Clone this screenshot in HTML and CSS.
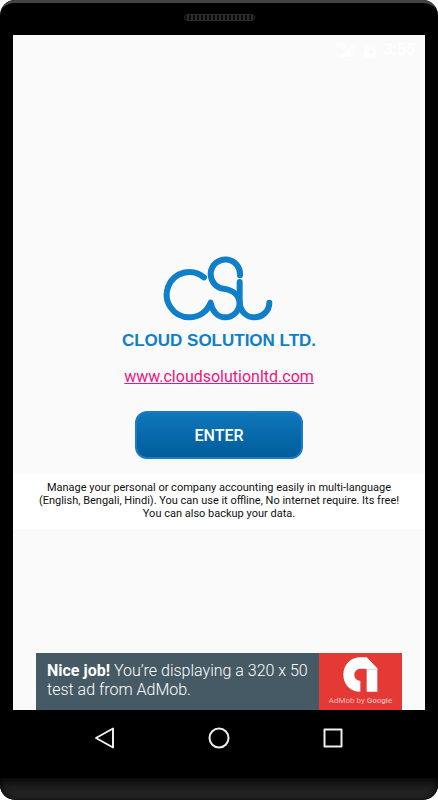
FILE: index.html
```html
<!DOCTYPE html>
<html lang="en">
    <head>
        <meta charset="UTF-8">
        <meta name="viewport" content="width=device-width, initial-scale=1.0">
        <title>Cloud Solution Ltd.</title>
        <link rel="stylesheet" href="styles.css">
    </head>
    <body>
        <div class="phone">
            <div class="phone-top">
                <div class="speaker"></div>
            </div>

            <div class="screen">
                <header class="status-bar">
                    <svg width="21" height="17" viewBox="0 0 21 17">
                        <path d="M20 1v15H5z" fill="#fcfcfc"/>
                        <path d="M15 6v10H5z" fill="#fff"/>
                        <path d="M3 1L1 5h4M4 1v6M10 2H7v5h3V4H9" fill="none" stroke="#fff" stroke-width="1"/>
                    </svg>
                    <svg width="12" height="17" viewBox="0 0 12 17">
                        <path d="M0 3h3V1h6v2h3v6H0z" fill="#fcfcfc"/>
                        <path d="M0 9h5l-2 3h3l-2 4 6-6H7l1-1h4v8H0z" fill="#fff"/>
                    </svg>
                    <span class="clock">3:55</span>
                </header>

                <main>
                    <svg class="logo" width="112" height="65" viewBox="24 15 336 195">
                        <path d="M147 79A68 68 0 1 0 103 199C132 199 157 182 167 155C171 181 188 199 211 199C235 199 254 179 254 155V93"/>
                        <path d="M255 73A44 44 0 1 0 205 113C231 117 250 126 254 155C256 181 274 199 298 199C323 199 343 179 343 155"/>
                    </svg>
                    <h1>CLOUD SOLUTION LTD.</h1>
                    <a class="site" href="#">www.cloudsolutionltd.com</a>
                    <button class="enter">ENTER</button>
                    <p class="about">Manage your personal or company accounting easily in multi-language (English, Bengali, Hindi). You can use it offline, No internet require. Its free! You can also backup your data.</p>
                </main>

                <div class="ad">
                    <p class="ad-text"><b>Nice job!</b> You’re displaying a 320 x 50 test ad from AdMob.</p>
                    <div class="ad-brand">
                        <svg width="35" height="35" viewBox="0 0 105 105">
                            <path d="M52 104C22 104 1 82 1 53C1 23 23 1 53 1H71L103 34V104H71V35H53C42 35 34 43 34 53C34 64 42 71 52 71z" fill="#fff"/>
                            <path d="M71 35H103V39H71z" fill="#ddd"/>
                        </svg>
                        <span>AdMob by <b>Google</b></span>
                    </div>
                </div>
            </div>

            <nav class="nav-bar">
                <button aria-label="Back">
                    <svg width="24" height="24" viewBox="0 0 24 24"><path d="M20 2.500V21.500L3 12z"/></svg>
                </button>
                <button aria-label="Home">
                    <svg width="24" height="24" viewBox="0 0 24 24"><circle cx="12" cy="12" r="9.500"/></svg>
                </button>
                <button aria-label="Recent">
                    <svg width="24" height="24" viewBox="0 0 24 24"><rect x="3.500" y="3.500" width="17" height="17"/></svg>
                </button>
            </nav>
            <div class="phone-bottom"></div>
        </div>
    </body>
</html>
```
FILE: styles.css
```css
* {
    box-sizing: border-box;
}

body {
    font-family: Roboto, Arial, sans-serif;
    background-color: white;
    margin: 0;
}

h1, p {
    margin: 0;
}

.phone {
    display: flex;
    flex-direction: column;
    min-height: 100vh;
    background-color: black;
    border-radius: 15px;
    overflow: hidden;
}

.phone-top {
    display: flex;
    justify-content: center;
    height: 35px;
    padding-top: 11px;
    border-top: 3px solid #444;
    border-radius: 15px 15px 0 0;
}

.speaker {
    width: 71px;
    height: 7px;
    border: 1px solid #2c2c2c;
    border-radius: 4px;
    background: repeating-linear-gradient(90deg, #0a0a0a 0 2px, #2c2c2c 2px 4px);
}

.screen {
    flex: 1;
    display: flex;
    flex-direction: column;
    margin: 0 13px;
    background-color: #fafafa;
}

.status-bar {
    display: flex;
    justify-content: flex-end;
    align-items: center;
    gap: 8px;
    height: 28px;
    padding-right: 10px;
}

.clock {
    color: white;
    font-size: 16px;
    font-weight: 500;
}

main {
    flex: 1;
    display: flex;
    flex-direction: column;
    align-items: center;
    padding-top: 193px;
    text-align: center;
}

.logo {
    fill: none;
    stroke: #107fc9;
    stroke-width: 18;
    stroke-linecap: round;
    stroke-linejoin: round;
}

h1 {
    margin-top: 10px;
    font-family: "Liberation Sans", Arial, sans-serif;
    font-size: 17px;
    line-height: 20px;
    color: #107fc9;
}

.site {
    margin-top: 16px;
    font-size: 16px;
    line-height: 20px;
    color: #f0147d;
}

.enter {
    width: 168px;
    height: 48px;
    margin-top: 24px;
    border: 2px solid #1a7cc4;
    border-radius: 12px;
    background: linear-gradient(#0f76bb, #005d9b);
    color: white;
    font-family: inherit;
    font-size: 16px;
    font-weight: 500;
    cursor: pointer;
}

.about {
    align-self: stretch;
    margin-top: 14px;
    padding: 8px 16px 9px;
    background-color: white;
    color: #111;
    font-size: 11px;
    line-height: 13px;
}

.ad {
    display: flex;
    height: 57px;
    margin: 0 23px;
    background-color: #455a64;
}

.ad-text {
    flex: 1;
    padding: 8px 0 0 11px;
    color: white;
    font-size: 16px;
    font-weight: 300;
    line-height: 19px;
}

.ad-text b {
    font-weight: 700;
}

.ad-brand {
    display: flex;
    flex-direction: column;
    align-items: center;
    gap: 4px;
    width: 83px;
    padding-top: 4px;
    background-color: #e53935;
    color: #f9b9b5;
    font-size: 8px;
    line-height: 10px;
}

.ad-brand b {
    font-weight: 500;
}

.nav-bar {
    display: flex;
    justify-content: center;
    gap: 90px;
    height: 68px;
    padding-top: 16px;
}

.nav-bar button {
    width: 24px;
    height: 24px;
    padding: 0;
    border: none;
    background: none;
    cursor: pointer;
}

.nav-bar svg {
    display: block;
    fill: none;
    stroke: #eee;
    stroke-width: 2;
    stroke-linejoin: round;
}

.phone-bottom {
    height: 22px;
    border-radius: 0 0 15px 15px;
    background: linear-gradient(#111, #2a2a2a);
    box-shadow: inset 0 0 6px black;
}
```
